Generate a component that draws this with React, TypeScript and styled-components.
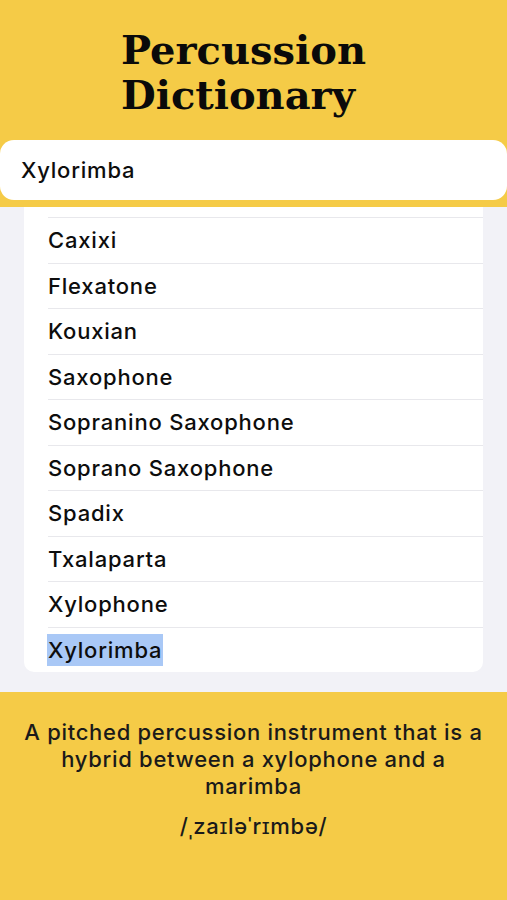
import React from "react";
import styled, { createGlobalStyle } from "styled-components";

const Global = createGlobalStyle`
  html, body { margin: 0; padding: 0; }
  body { background: #f2f2f7; font-family: "Inter", "Liberation Sans", sans-serif; }
  * { box-sizing: border-box; }
`;

const YELLOW = "#f5cb47";

const Page = styled.div`
  width: 507px;
  height: 900px;
  display: flex;
  flex-direction: column;
  overflow: hidden;
`;

const Header = styled.header`
  background: ${YELLOW};
  padding: 27px 0 7px;
  display: flex;
  flex-direction: column;
`;

const Title = styled.h1`
  margin: 0 0 0 121px;
  font-family: "DejaVu Serif", "Liberation Serif", serif;
  font-weight: 700;
  font-size: 40px;
  line-height: 45px;
  color: #0a0a0a;
`;

const SearchBox = styled.div`
  margin-top: 23px;
  height: 60px;
  background: #ffffff;
  border-radius: 14px;
  display: flex;
  align-items: center;
  padding-left: 21px;
  font-size: 22px;
  font-weight: 500;
  letter-spacing: 0.8px;
  color: #0d0d0d;
`;

const ListArea = styled.div`
  flex: 0 0 485px;
  background: #f2f2f7;
  padding: 0 24px;
  overflow: hidden;
`;

const Card = styled.ul`
  list-style: none;
  margin: 0;
  padding: 0;
  background: #ffffff;
  border-radius: 0 0 10px 10px;
`;

const TopSlice = styled.li`
  height: 10px;
`;

const Row = styled.li`
  height: 45.5px;
  margin-left: 24px;
  display: flex;
  align-items: center;
  font-size: 22px;
  font-weight: 500;
  letter-spacing: 0.8px;
  color: #0d0d0d;
  border-top: 1px solid #e8e8ec;
`;

const Label = styled.span<{ $selected: boolean }>`
  background: ${(p) => (p.$selected ? "#a9c8f6" : "transparent")};
  padding: 3px 1px;
  margin-left: -1px;
`;

const Footer = styled.footer`
  flex: 1;
  background: ${YELLOW};
  padding: 27px 16px 0;
  display: flex;
  flex-direction: column;
  align-items: center;
  text-align: center;
  color: #1a1a1a;
  font-weight: 500;
  font-size: 22px;
  letter-spacing: 0.7px;
`;

const Definition = styled.p`
  margin: 0;
  line-height: 27px;
`;

const Pronunciation = styled.p`
  margin: 13px 0 0;
  line-height: 27px;
`;

const items = [
  "Caxixi",
  "Flexatone",
  "Kouxian",
  "Saxophone",
  "Sopranino Saxophone",
  "Soprano Saxophone",
  "Spadix",
  "Txalaparta",
  "Xylophone",
  "Xylorimba",
];

export default function App() {
  return (
    <Page>
      <Global />
      <Header>
        <Title>
          Percussion
          <br />
          Dictionary
        </Title>
        <SearchBox>Xylorimba</SearchBox>
      </Header>
      <ListArea>
        <Card>
          <TopSlice />
          {items.map((it) => (
            <Row key={it}>
              <Label $selected={it === "Xylorimba"}>{it}</Label>
            </Row>
          ))}
        </Card>
      </ListArea>
      <Footer>
        <Definition>
          A pitched percussion instrument that is a hybrid between a xylophone and a marimba
        </Definition>
        <Pronunciation>/ˌzaɪləˈrɪmbə/</Pronunciation>
      </Footer>
    </Page>
  );
}
